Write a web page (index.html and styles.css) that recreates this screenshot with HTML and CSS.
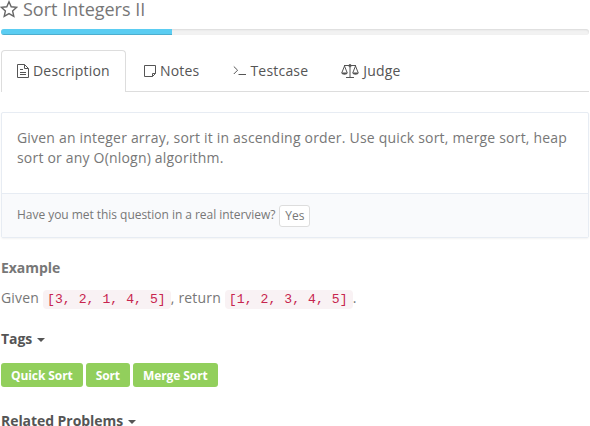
FILE: index.html
```html
<!DOCTYPE html>
<html lang="en">
<head>
<meta charset="utf-8">
<title>Sort Integers II</title>
<link rel="stylesheet" href="styles.css">
</head>
<body>
<main class="problem">
  <h1 class="title">
    <svg class="star" width="18" height="18" viewBox="0 0 18 18"><path d="M9 1.800l2.200 5 5.500.5-4.100 3.700 1.200 5.400L9 13.600l-4.800 2.800 1.200-5.400-4.100-3.700 5.500-.5z"/></svg>
    <span>Sort Integers II</span>
  </h1>
  <div class="progress"><div class="bar"></div></div>
  <nav class="tabs">
    <a class="tab active"><svg class="icon file" width="12" height="14" viewBox="0 0 12 14"><path d="M.5.5h7l4 4v9H.5zM7.500.5v4h4M3 5.500h3M3 8.500h6M3 10.500h6"/></svg><span>Description</span></a>
    <a class="tab"><svg class="icon note" width="12" height="12" viewBox="0 0 12 12"><path d="M.5.5h11v8l-3 3h-8zM8.500 11.500v-3h3"/></svg><span>Notes</span></a>
    <a class="tab"><svg class="icon term" width="14" height="12" viewBox="0 0 14 12"><path d="M.8 1.500l3.800 3.700L.8 9M5.500 9.500H13"/></svg><span>Testcase</span></a>
    <a class="tab judge"><svg class="icon scale" width="18" height="15" viewBox="0 0 18 15"><path d="M3 1.500h12M9 1.500v12M5 13.500h8M3.500 2L.8 8.800M3.500 2l2.700 6.800M14.500 2l-2.700 6.800M14.500 2l2.700 6.800"/><path class="fill" d="M.3 8.600h6.400c-.2 3-6.200 3-6.400 0zM11.300 8.600h6.400c-.2 3-6.200 3-6.400 0z"/><circle cx="9" cy="1.700" r="1.200"/></svg><span>Judge</span></a>
  </nav>
  <section class="panel">
    <p class="statement">Given an integer array, sort it in ascending order. Use quick sort, merge sort, heap sort or any O(nlogn) algorithm.</p>
    <footer class="question"><span>Have you met this question in a real interview?</span><button class="yes">Yes</button></footer>
  </section>
  <h2 class="heading example">Example</h2>
  <p class="sample">Given <code>[3, 2, 1, 4, 5]</code>, return <code>[1, 2, 3, 4, 5]</code>.</p>
  <h2 class="heading dark">Tags <i class="caret"></i></h2>
  <div class="tags"><a class="tag">Quick Sort</a><a class="tag">Sort</a><a class="tag">Merge Sort</a></div>
  <h2 class="heading dark">Related Problems <i class="caret"></i></h2>
</main>
</body>
</html>
```
FILE: styles.css
```css
* { box-sizing: border-box; }
body {
  margin: 0;
  height: 426px;
  background: #fff;
  color: #777;
  font: 14px/20px "Open Sans", sans-serif;
  letter-spacing: 0.195px;
}
h1, h2, p { margin: 0; }
.problem { margin: 0 1px; }
.title {
  display: flex;
  align-items: center;
  gap: 5px;
  height: 20px;
  padding-bottom: 2px;
  font-size: 18px;
  font-weight: 400;
  line-height: 18px;
  letter-spacing: 0;
}
.star { margin-left: -1px; flex: none; }
svg { fill: none; stroke: #555; stroke-width: 1; }
.star { stroke: #666; stroke-width: 1.4; }
.progress {
  height: 6px;
  margin-top: 9px;
  border-radius: 3px;
  background: #f2f2f2;
  box-shadow: inset 0 1px 2px rgba(0,0,0,.1);
  overflow: hidden;
}
.bar {
  width: 171px;
  height: 6px;
  background: #5bcdf2;
  box-shadow: inset 0 -1px 0 rgba(0,0,0,.15);
}
.tabs {
  display: flex;
  height: 42px;
  margin-top: 15px;
  border-bottom: 1px solid #ddd;
}
.tab {
  display: flex;
  align-items: center;
  height: 42px;
  padding: 0 16px 0 18px;
  color: #555;
}
.tab.active {
  width: 125px;
  padding: 0 0 1px 15px;
  border: 1px solid #ddd;
  border-bottom: 0;
  border-radius: 4px 4px 0 0;
  background: #fff;
}
.tab.judge { padding-left: 17px; }
.icon { flex: none; margin-right: 4px; }
.term { margin-right: 3px; }
.scale .fill { fill: #555; stroke: none; }
.panel {
  height: 126px;
  margin-top: 20px;
  border: 1px solid #e7ecf3;
  border-radius: 2px;
  box-shadow: 0 1px 2px rgba(0,0,0,.05);
}
.statement { height: 80px; padding: 15px; }
.question {
  display: flex;
  align-items: center;
  gap: 4px;
  height: 44px;
  padding: 0 15px;
  border-top: 1px solid #e7ecf3;
  background: #f9fafc;
  font-size: 12px;
  letter-spacing: -0.04px;
}
.question span { padding-bottom: 1px; }
.yes {
  width: 31px;
  height: 22px;
  padding: 0;
  border: 1px solid #ddd;
  border-radius: 3px;
  background: #fff;
  color: #777;
  font: 12px/20px "Open Sans", sans-serif;
}
.heading { font-size: 14px; font-weight: 700; line-height: 20px; letter-spacing: -0.06px; }
.example { margin-top: 20px; }
.sample { margin: 10px 0 21px; }
code {
  padding: 2px 5px 2px 4px;
  border-radius: 4px;
  background: #f9f2f4;
  color: #c7254e;
  font: 13.1px/15px "Liberation Mono", monospace;
  letter-spacing: 0.06px;
}
.dark { color: #555; }
.caret {
  display: inline-block;
  margin-left: 1px;
  vertical-align: middle;
  border: 4px solid transparent;
  border-top-color: #555;
  border-bottom: 0;
}
.tags { display: flex; gap: 3px; margin: 14px 0 24px; }
.tag {
  height: 24px;
  padding: 0 10px;
  border-radius: 3px;
  background: #92cf5c;
  color: #fff;
  font-size: 12px;
  font-weight: 700;
  line-height: 25px;
  letter-spacing: -0.09px;
}
```
